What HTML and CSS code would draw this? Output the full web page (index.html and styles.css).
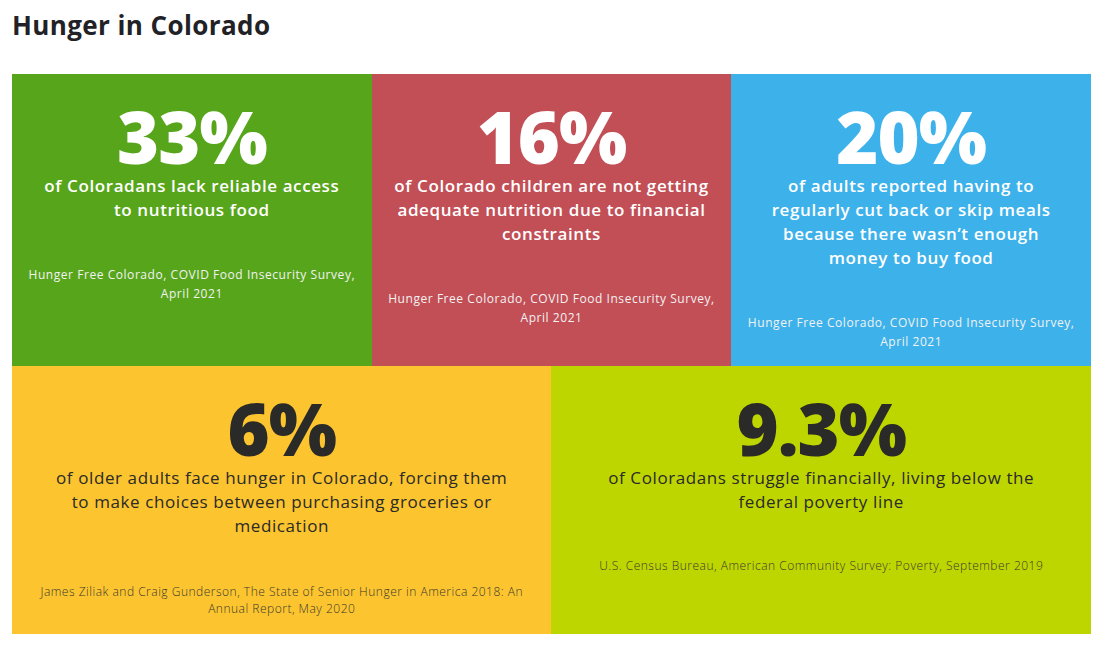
FILE: index.html
```html
<!DOCTYPE html>
<html lang="en">
<head>
<meta charset="utf-8">
<title>Hunger in Colorado</title>
<link rel="stylesheet" href="styles.css">
</head>
<body>
<main class="page">
  <h1 class="title">Hunger in Colorado</h1>
  <section class="stats">
    <article class="card card-green">
      <div class="num">33%</div>
      <p class="desc">of Coloradans lack reliable access<br>to nutritious food</p>
      <p class="src">Hunger Free Colorado, COVID Food Insecurity Survey,<br>April 2021</p>
    </article>
    <article class="card card-red">
      <div class="num">16%</div>
      <p class="desc">of Colorado children are not getting<br>adequate nutrition due to financial<br>constraints</p>
      <p class="src">Hunger Free Colorado, COVID Food Insecurity Survey,<br>April 2021</p>
    </article>
    <article class="card card-blue">
      <div class="num">20%</div>
      <p class="desc">of adults reported having to<br>regularly cut back or skip meals<br>because there wasn’t enough<br>money to buy food</p>
      <p class="src">Hunger Free Colorado, COVID Food Insecurity Survey,<br>April 2021</p>
    </article>
    <article class="card card-wide card-yellow">
      <div class="num">6%</div>
      <p class="desc">of older adults face hunger in Colorado, forcing them<br>to make choices between purchasing groceries or<br>medication</p>
      <p class="src">James Ziliak and Craig Gunderson, The State of Senior Hunger in America 2018: An<br>Annual Report, May 2020</p>
    </article>
    <article class="card card-wide card-lime">
      <div class="num">9.3%</div>
      <p class="desc">of Coloradans struggle financially, living below the<br>federal poverty line</p>
      <p class="src src-single">U.S. Census Bureau, American Community Survey: Poverty, September 2019</p>
    </article>
  </section>
</main>
</body>
</html>
```
FILE: styles.css
```css
html, body {
  margin: 0;
  padding: 0;
  background: #ffffff;
}

.page {
  padding: 7px 16px 0 12px;
  font-family: "Open Sans", "Noto Sans", sans-serif;
}

.title {
  margin: 0 0 31px 0;
  font-size: 26px;
  line-height: 36px;
  font-weight: 700;
  color: #222226;
  letter-spacing: 0.4px;
}

.stats {
  display: grid;
  grid-template-columns: repeat(6, 1fr);
  grid-template-rows: 292px 268px;
  width: 1079px;
}

.card {
  grid-column: span 2;
  padding: 26px 6px 0 6px;
  text-align: center;
  color: #ffffff;
  box-sizing: border-box;
}

.card-wide {
  grid-column: span 3;
  color: #2a2a28;
}

.card-green { background: #57a51b; }
.card-red { background: #c24e56; }
.card-blue { background: #3db1ea; }
.card-yellow { background: #fcc42e; }
.card-lime { background: #bed600; }

.num {
  font-size: 72px;
  line-height: 72px;
  font-weight: 800;
  letter-spacing: -1px;
}

.desc {
  margin: 2px 0 0 0;
  font-size: 17px;
  line-height: 24px;
  font-weight: 600;
  letter-spacing: 0.6px;
}

.card-wide .desc {
  font-weight: 500;
}

.src {
  margin: 43px 0 0 0;
  font-size: 12px;
  line-height: 19px;
  font-weight: 400;
  color: #f2f2f2;
  letter-spacing: 0.55px;
}

.card-wide .src {
  margin-top: 45px;
  font-weight: 300;
  color: #3a3a30;
  line-height: 17px;
  letter-spacing: 0.5px;
}

.card-wide .src-single {
  margin-top: 43px;
}
```
